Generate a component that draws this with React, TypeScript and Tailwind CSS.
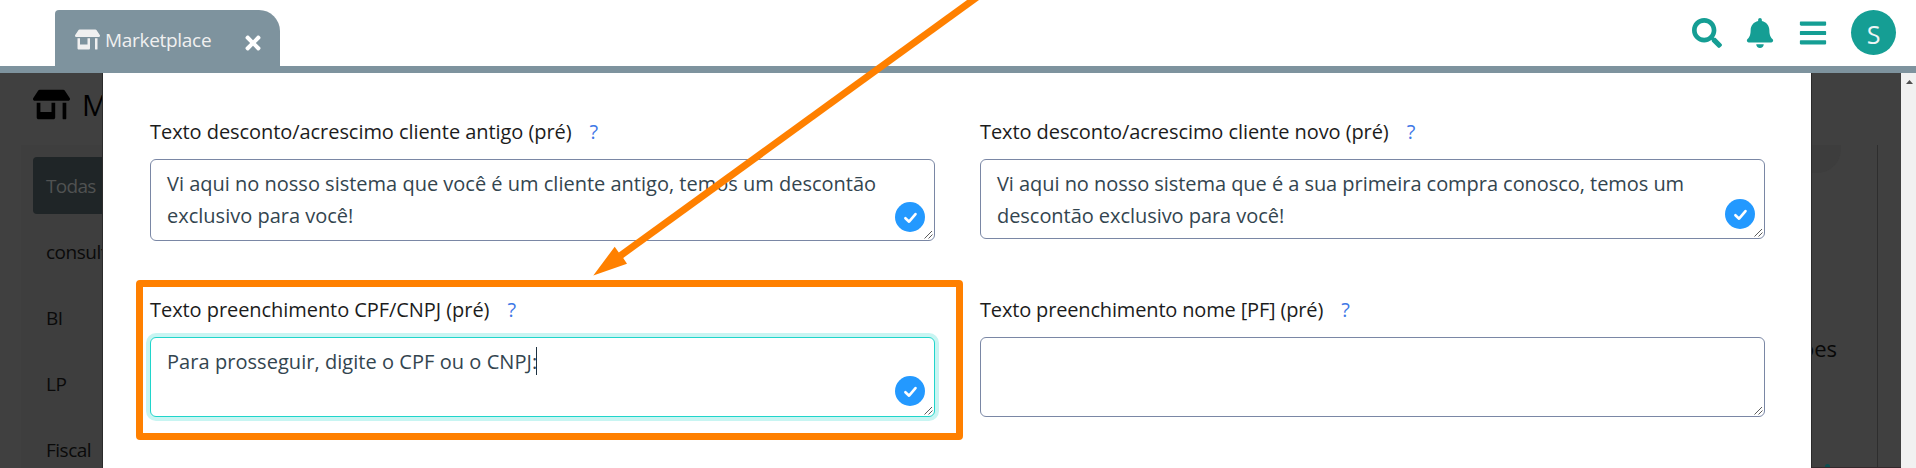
import type { ReactNode } from 'react';
import { FaBars, FaBell, FaSearch, FaStoreAlt, FaTimes } from 'react-icons/fa';

const categories = ['Todas', 'consult', 'BI', 'LP', 'Fiscal'];

function TopBar() {
  return (
    <header className="flex h-[73px] shrink-0 items-start justify-between border-b-[7px] border-[#7e939e] bg-white pl-[55px] pr-5 pt-[10px]">
      <div className="flex h-14 w-[225px] items-center justify-between rounded-tl-[4px] rounded-tr-[21px] bg-[#7e939e] pl-5 pr-4 text-[#f0f0f0]">
        <div className="flex items-center gap-[5px] pb-[1px]">
          <FaStoreAlt className="mt-[3px] size-[25px]" />
          <span className="mt-[5px] text-[19px] leading-none tracking-[-0.3px]">Marketplace</span>
        </div>
        <FaTimes className="mt-[9px] size-[22px] text-white" />
      </div>
      <div className="flex h-[45px] items-center gap-[23px] text-[#159e94]">
        <FaSearch className="size-[30px]" />
        <FaBell className="size-[30px]" />
        <FaBars className="size-[30px]" />
        <div className="flex size-[45px] items-center justify-center rounded-full bg-[#159e94] pt-[3px] text-[25px] leading-none text-[#eef5f5]">
          S
        </div>
      </div>
    </header>
  );
}

function Sidebar() {
  return (
    <aside className="w-[103px] shrink-0 overflow-hidden border-r border-[#2b2b2b] bg-[#404040] pt-4">
      <div className="flex h-[30px] items-center gap-[12px] pl-[33px] text-black">
        <FaStoreAlt className="size-[37px] shrink-0" />
        <h1 className="mt-[1px] min-w-0 flex-1 overflow-hidden text-[29px] leading-[30px]">M</h1>
      </div>
      <nav className="ml-[21px] mt-[26px] flex h-[400px] flex-col gap-[9px] bg-[#3e3e3e] pl-3 pt-3">
        {categories.map((name, i) => (
          <div
            key={name}
            className={
              i === 0
                ? 'flex h-[57px] shrink-0 items-center rounded-l bg-[#1f2527] pl-[13px] pt-[2px] text-[19px] tracking-[-0.7px] text-[#505252]'
                : 'flex h-[57px] shrink-0 items-center pl-[13px] pt-[1px] text-[19px] tracking-[-0.5px] text-[#0a0a0a]'
            }
          >
            {name}
          </div>
        ))}
      </nav>
    </aside>
  );
}

function ResizeGrip() {
  return (
    <svg className="absolute bottom-0 right-0 size-[10px]" viewBox="0 0 10 10" fill="none" stroke="#4a4a4a" strokeWidth="0.9">
      <path d="M0.5 8.5 8 1M4.5 8.5 8.5 4.5" />
    </svg>
  );
}

function CheckBadge({ className }: { className: string }) {
  return (
    <svg className={className} viewBox="0 0 30 30" fill="none">
      <circle cx="15" cy="15" r="15" fill="#2399ff" />
      <path d="m10.4 16.2 3.7 3.5 6.4-7.6" stroke="#fff" strokeWidth="2.6" strokeLinecap="round" strokeLinejoin="round" />
    </svg>
  );
}

function Field({ label, labelClass, boxClass, children }: { label: string; labelClass: string; boxClass: string; children?: ReactNode }) {
  return (
    <div>
      <div className="flex h-[31px] items-center pt-[1px] text-[20px] leading-[30px] text-[#1c1c1c]">
        <span className={labelClass}>{label}</span>
        <span className="text-[#3f78e6]">?</span>
      </div>
      <div className={`relative mt-3 whitespace-pre rounded-[6px] border bg-white pl-4 pt-2 text-[20px] leading-8 text-[#33454f] ${boxClass}`}>
        {children}
        <ResizeGrip />
      </div>
    </div>
  );
}

function Modal() {
  return (
    <main className="w-[1708px] shrink-0 bg-white pl-[47px] pr-[46px] pt-[43px]">
      <div className="grid grid-cols-[785px_785px] gap-x-[45px]">
        <div className="h-[178px]">
          <Field
            label="Texto desconto/acrescimo cliente antigo (pré)"
            labelClass="mr-[18px] tracking-[-0.06px]"
            boxClass="h-[82px] border-[#7a87a5]"
          >
            <p>{'Vi aqui no nosso sistema que você é um cliente antigo, temos um descontão\nexclusivo para você!'}</p>
            <CheckBadge className="absolute bottom-2 right-[9px] size-[30px]" />
          </Field>
        </div>
        <div className="h-[178px]">
          <Field
            label="Texto desconto/acrescimo cliente novo (pré)"
            labelClass="mr-[18px] tracking-[-0.08px]"
            boxClass="h-[80px] border-[#7a87a5]"
          >
            <p className="tracking-[-0.05px]">{'Vi aqui no nosso sistema que é a sua primeira compra conosco, temos um\ndescontão exclusivo para você!'}</p>
            <CheckBadge className="absolute bottom-[9px] right-[9px] size-[30px]" />
          </Field>
        </div>
        <Field
          label="Texto preenchimento CPF/CNPJ (pré)"
          labelClass="mr-[18px] tracking-[-0.06px]"
          boxClass="h-[80px] border-[#20d5cb] shadow-[0_0_0_4px_#c8f5f2]"
        >
          <div className="flex h-8 items-center">
            <p className="tracking-[0.05px]">Para prosseguir, digite o CPF ou o CNPJ:</p>
            <i className="-ml-[1px] mb-[3px] h-7 w-px bg-[#1d3140]" />
          </div>
          <CheckBadge className="absolute bottom-[10px] right-[9px] size-[30px]" />
        </Field>
        <Field
          label="Texto preenchimento nome [PF] (pré)"
          labelClass="mr-[18px] tracking-[-0.16px]"
          boxClass="h-[80px] border-[#7a87a5]"
        />
      </div>
    </main>
  );
}

function RightEdge() {
  return (
    <div className="flex w-[90px] shrink-0 flex-col overflow-hidden border-b border-l border-b-[#33292c] border-l-[#2b2b2b] bg-[#404040] pt-[72px]">
      <div className="flex h-[322px] w-[66px] flex-col border-r border-[#2e2e2e]">
        <div className="h-7 w-[29px] shrink-0 rounded-br-[24px] bg-[#3d3d3d]" />
        <div className="mt-[160px] flex w-[25px] shrink-0 justify-end text-[22px] leading-[30px] text-[#080808]">ões</div>
        <div className="ml-[13px] mt-[101px] h-[3px] w-[5px] shrink-0 rounded-t-full bg-[#0b4f50]" />
      </div>
    </div>
  );
}

function Annotation() {
  return (
    <>
      <div className="absolute left-[136px] top-[280px] h-[160px] w-[827px] rounded-[4px] border-[7px] border-[#ff8000]" />
      <svg className="absolute left-[590px] top-0 h-[280px] w-[400px]" viewBox="590 0 400 280">
        <path d="M980.5 -5.4 620.5 255.6" stroke="#ff8000" strokeWidth="7" />
        <path d="M593.3 275.6 614.7 246.7 618.6 252.3 623.2 258 627 263.7Z" fill="#ff8000" />
      </svg>
    </>
  );
}

export default function App() {
  return (
    <div className="relative flex h-[468px] w-[1916px] flex-col overflow-hidden bg-white font-['Open_Sans','Noto_Sans',sans-serif]">
      <TopBar />
      <div className="flex min-h-0 flex-1">
        <Sidebar />
        <Modal />
        <RightEdge />
        <div className="flex flex-1 justify-center bg-[#f1f1f1] pt-[7px]">
          <svg className="ml-[2px] h-1 w-[7px]" viewBox="0 0 7 4" fill="#505050">
            <path d="M0 4 3.5 0 7 4Z" />
          </svg>
        </div>
      </div>
      <Annotation />
    </div>
  );
}
